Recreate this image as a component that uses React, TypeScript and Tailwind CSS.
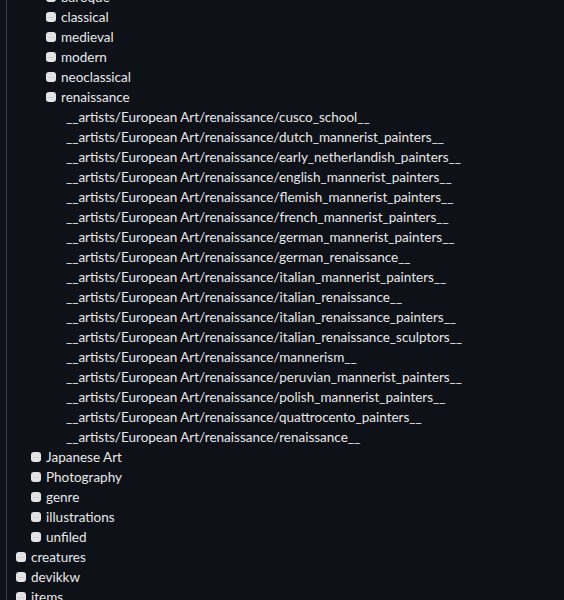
import React from "react";

const styles = ["baroque", "classical", "medieval", "modern", "neoclassical"];

const renaissance = [
  "cusco_school",
  "dutch_mannerist_painters",
  "early_netherlandish_painters",
  "english_mannerist_painters",
  "flemish_mannerist_painters",
  "french_mannerist_painters",
  "german_mannerist_painters",
  "german_renaissance",
  "italian_mannerist_painters",
  "italian_renaissance",
  "italian_renaissance_painters",
  "italian_renaissance_sculptors",
  "mannerism",
  "peruvian_mannerist_painters",
  "polish_mannerist_painters",
  "quattrocento_painters",
  "renaissance",
];

const artGroups = ["Japanese Art", "Photography", "genre", "illustrations", "unfiled"];
const topLevel = ["creatures", "devikkw", "items"];

// little rounded square used as bullet
const Bullet = () => (
  <span className="relative mr-[5px] inline-block h-[10px] w-[10px] shrink-0 rounded-[3px] bg-[#e4e4e6]">
    <span className="absolute left-[2px] right-[2px] top-[5px] h-px bg-[#d2d2d4]" />
  </span>
);

const Row = ({ label, bullet = true }: { label: string; bullet?: boolean }) => (
  <li className="flex h-5 items-center whitespace-nowrap">
    {bullet && <Bullet />}
    <span>{label}</span>
  </li>
);

export default function App() {
  return (
    <div className="h-[600px] w-[564px] overflow-hidden bg-[#0e1117] font-['Lato','Noto_Sans',sans-serif] text-[13.5px] text-[#e8e8ea]">
      <div className="flex h-full">
        {/* left rule */}
        <div className="ml-[6px] w-px bg-[#3b3f49]" />
        <ul className="-mt-[13px] pl-[9px]">
          <li>
            <ul className="pl-[15px]">
              <li>
                <ul className="pl-[15px]">
                  {styles.map((s) => (
                    <Row key={s} label={s} />
                  ))}
                  <Row label="renaissance" />
                  <li>
                    <ul className="pl-[20px]">
                      {renaissance.map((r) => (
                        <Row
                          key={r}
                          bullet={false}
                          label={`__artists/European Art/renaissance/${r}__`}
                        />
                      ))}
                    </ul>
                  </li>
                </ul>
              </li>
              {artGroups.map((g) => (
                <Row key={g} label={g} />
              ))}
            </ul>
          </li>
          {topLevel.map((t) => (
            <Row key={t} label={t} />
          ))}
        </ul>
      </div>
    </div>
  );
}
